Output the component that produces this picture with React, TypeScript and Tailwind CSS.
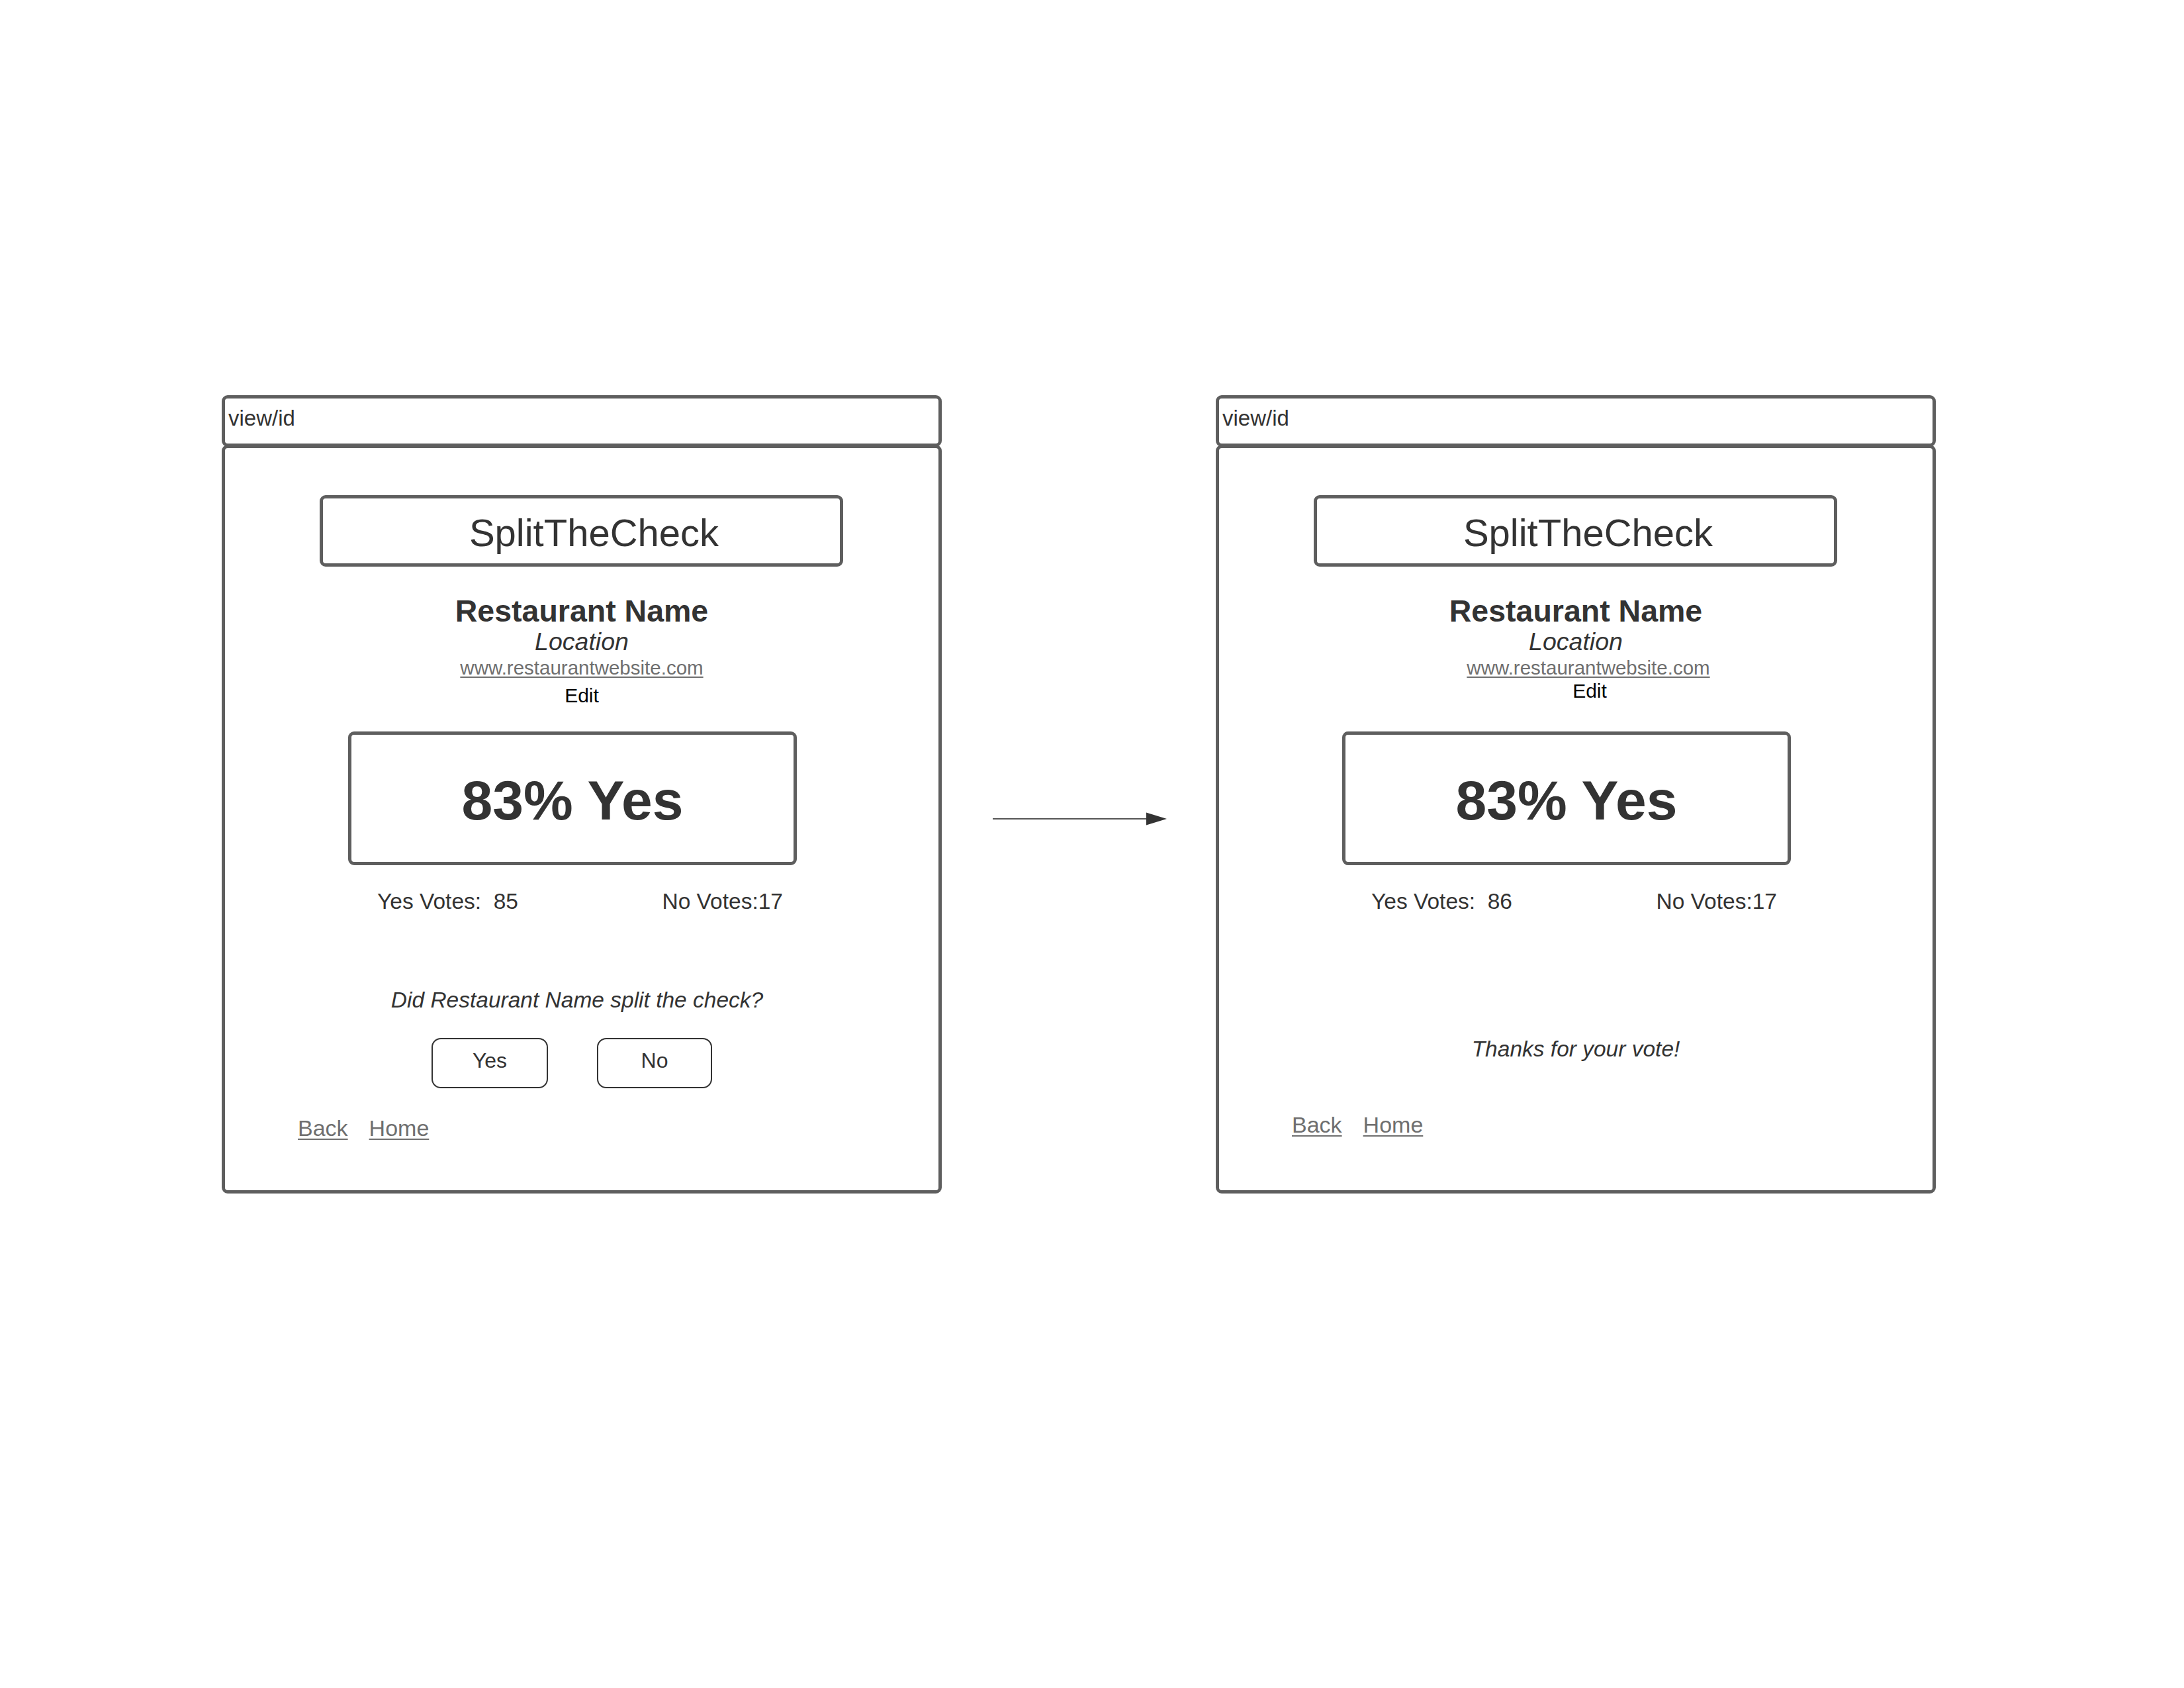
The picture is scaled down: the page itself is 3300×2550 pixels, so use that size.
import React from 'react';

const frameBorder = 'border-[5px] border-[#5e5e5e] rounded-[9px] bg-white';

const Arrow = () => (
  <div className="w-[414px] pt-[630px] pl-[77px]">
    <svg width="264" height="20" viewBox="0 0 264 20">
      <line x1="0" y1="10" x2="234" y2="10" stroke="#555555" strokeWidth="2" />
      <polygon points="232,0.5 263,10 232,19.5" fill="#333333" />
    </svg>
  </div>
);

const BackHome = ({ className }: { className: string }) => (
  <div
    className={`self-start ml-[110px] flex gap-[32px] text-[34px] leading-none text-[#6f6f6f] ${className}`}
  >
    <span className="underline decoration-[2px] underline-offset-[4px]">Back</span>
    <span className="underline decoration-[2px] underline-offset-[4px]">Home</span>
  </div>
);

const Frame = ({ yes, voted }: { yes: number; voted: boolean }) => {
  return (
    <div className="w-[1088px] flex flex-col">
      {/* address bar */}
      <div className={`h-[78px] pl-[5px] pt-[13px] text-[33px] leading-none text-[#333] ${frameBorder}`}>
        view/id
      </div>

      <div className={`-mt-[3px] h-[1131px] flex flex-col items-center text-[#333] ${frameBorder}`}>
        <div className="self-start ml-[143px] mt-[71px] w-[791px] h-[108px] border-[5px] border-[#5e5e5e] rounded-[9px] flex items-center justify-center pl-[38px] pt-[6px] text-[58px] leading-none">
          SplitTheCheck
        </div>

        <div className="mt-[44px] text-[46.5px] leading-none font-bold">Restaurant Name</div>
        <div className="mt-[4px] text-[37.5px] leading-none italic">Location</div>
        <div
          className={`mt-[6px] text-[29.5px] leading-none text-[#6f6f6f] underline decoration-[2px] underline-offset-[3px] ${
            voted ? 'ml-[38px]' : ''
          }`}
        >
          www.restaurantwebsite.com
        </div>
        <div className={`text-[30px] leading-none text-black ${voted ? 'mt-[5px] ml-[42px]' : 'mt-[12px]'}`}>
          Edit
        </div>

        <div
          className={`self-start ml-[186px] w-[678px] h-[202px] border-[5px] border-[#5e5e5e] rounded-[9px] flex items-center justify-center pt-[7px] text-[84px] leading-none font-bold ${
            voted ? 'mt-[46px]' : 'mt-[39px]'
          }`}
        >
          83% Yes
        </div>

        <div className="self-start ml-[230px] mt-[38px] w-[613px] flex justify-between text-[33.5px] leading-none whitespace-pre">
          <span>{`Yes Votes:  ${yes}`}</span>
          <span>No Votes:17</span>
        </div>

        {voted ? (
          <>
            <div className="mt-[190px] text-[33.5px] leading-none italic">Thanks for your vote!</div>
            <BackHome className="mt-[80px]" />
          </>
        ) : (
          <>
            <div className="mt-[116px] mr-[14px] text-[33.5px] leading-none italic">
              Did Restaurant Name split the check?
            </div>
            <div className="self-start ml-[312px] mt-[40px] flex gap-[74px]">
              <button className="w-[176px] h-[76px] border-2 border-[#333] rounded-[14px] flex items-center justify-center pb-[8px] text-[32px] leading-none">
                Yes
              </button>
              <button className="w-[174px] h-[76px] border-2 border-[#333] rounded-[14px] flex items-center justify-center pb-[8px] text-[32px] leading-none">
                No
              </button>
            </div>
            <BackHome className="mt-[43px]" />
          </>
        )}
      </div>
    </div>
  );
};

export default function App() {
  return (
    <div className="w-[3300px] h-[2550px] bg-white flex items-start pt-[597px] pl-[335px] [font-family:'Liberation_Sans',Arial,sans-serif]">
      <Frame yes={85} voted={false} />
      <Arrow />
      <Frame yes={86} voted={true} />
    </div>
  );
}
